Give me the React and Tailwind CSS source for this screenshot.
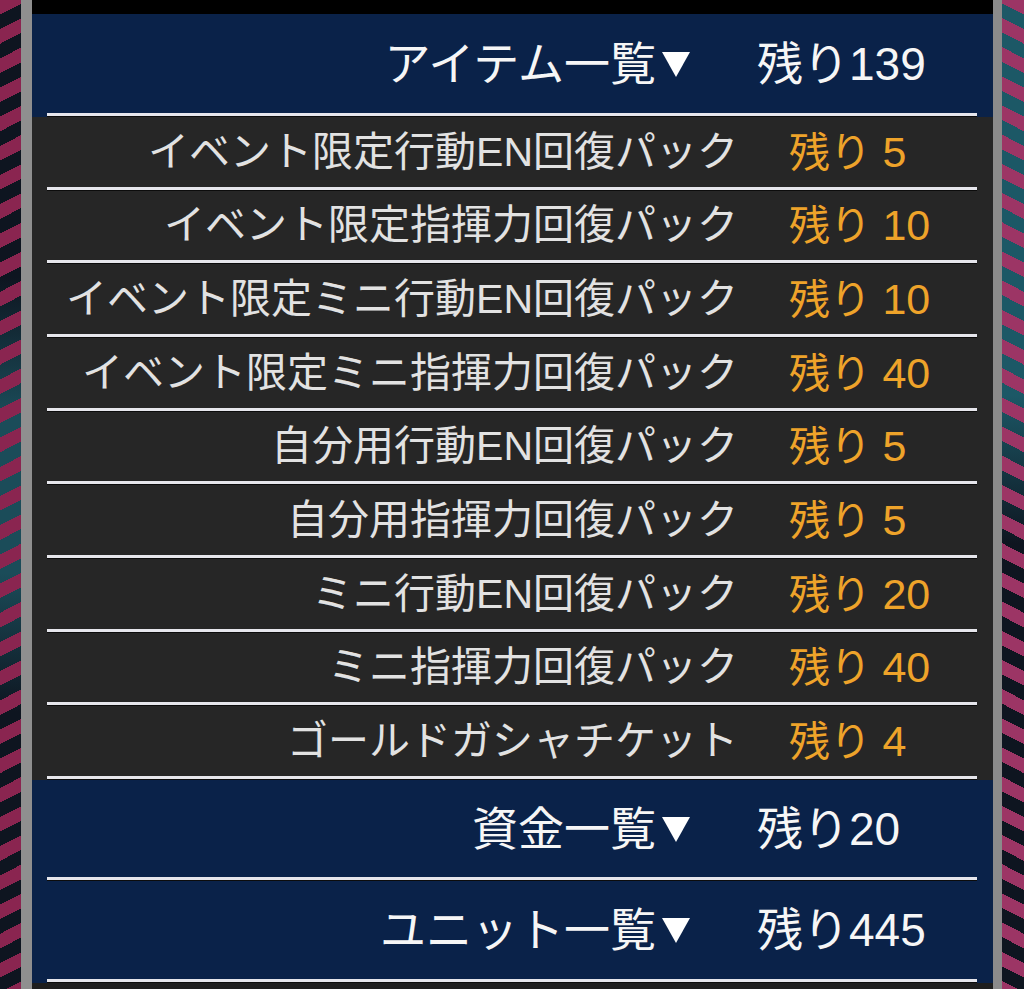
import React from "react";

const items = [
  ["イベント限定行動EN回復パック", "5"],
  ["イベント限定指揮力回復パック", "10"],
  ["イベント限定ミニ行動EN回復パック", "10"],
  ["イベント限定ミニ指揮力回復パック", "40"],
  ["自分用行動EN回復パック", "5"],
  ["自分用指揮力回復パック", "5"],
  ["ミニ行動EN回復パック", "20"],
  ["ミニ指揮力回復パック", "40"],
  ["ゴールドガシャチケット", "4"],
];

const heights = [
  "h-[70px]",
  "h-[69px]",
  "h-[70px]",
  "h-[70px]",
  "h-[69px]",
  "h-[70px]",
  "h-[70px]",
  "h-[69px]",
  "h-[70px]",
];

function Sep({ bg }) {
  return (
    <div className={`flex h-[4px] flex-col ${bg}`}>
      <div className="ml-[15px] mr-[16px] h-[3px] bg-[#e6e6ec]" />
      <div className="ml-[15px] mr-[16px] h-px bg-[#0c0c0c]" />
    </div>
  );
}

function Tri() {
  return (
    <svg width="30" height="28" viewBox="0 0 30 28" className="ml-[5px] shrink-0">
      <polygon points="1,2 29,2 15,27" fill="#ffffff" />
    </svg>
  );
}

function Header({ label, count, h }) {
  return (
    <div className={`flex ${h} items-center bg-[#0a2249] text-[46px] leading-none text-[#f6f6f6]`}>
      <div className="flex w-[659px] items-center justify-end">
        <span>{label}</span>
        <Tri />
      </div>
      <div className="pl-[66px]">残り{count}</div>
    </div>
  );
}

function Item({ name, count, h }) {
  return (
    <div className={`flex ${h} items-center bg-[#262626] text-[41px] leading-none`}>
      <div className="w-[706px] text-right text-[#e2e2e2] whitespace-nowrap">{name}</div>
      <div className="pl-[51px] text-[#eea32a] whitespace-nowrap">
        残り <span className="text-[43px]">{count}</span>
      </div>
    </div>
  );
}

export default function App() {
  return (
    <div className="flex h-[989px] w-[1024px] overflow-hidden bg-black font-['Liberation_Sans','Noto_Sans_CJK_JP',sans-serif]">
      <div className="w-[21px] shrink-0 [background-image:repeating-linear-gradient(153deg,#8a2550_0px,#8a2550_13px,transparent_13px,transparent_26px),linear-gradient(to_bottom,#0e1520_0%,#0e1520_28%,#1b4c59_42%,#1b4c59_58%,#0e1520_72%,#0e1520_100%)]" />
      <div className="w-[11px] shrink-0 bg-[#8f8f8f]" />
      <div className="flex w-[961px] shrink-0 flex-col bg-[#222222]">
        <div className="h-[14px] bg-black" />
        <Header label="アイテム一覧" count="139" h="h-[99px]" />
        <Sep bg="bg-[#0a2249]" />
        {items.map(([name, count], i) => (
          <React.Fragment key={name}>
            <Item name={name} count={count} h={heights[i]} />
            <Sep bg="bg-[#262626]" />
          </React.Fragment>
        ))}
        <Header label="資金一覧" count="20" h="h-[97px]" />
        <Sep bg="bg-[#0a2249]" />
        <Header label="ユニット一覧" count="445" h="h-[98px]" />
        <Sep bg="bg-[#0a2249]" />
        <div className="flex-1 bg-[#1e1e1e]" />
      </div>
      <div className="w-[9px] shrink-0 bg-[#8b8b8b]" />
      <div className="w-[22px] shrink-0 [background-image:repeating-linear-gradient(207deg,#9c3565_0px,#9c3565_13px,transparent_13px,transparent_26px),linear-gradient(to_bottom,#1c5866_0%,#1c5866_40%,#0e1520_55%,#0e1520_100%)]" />
    </div>
  );
}
